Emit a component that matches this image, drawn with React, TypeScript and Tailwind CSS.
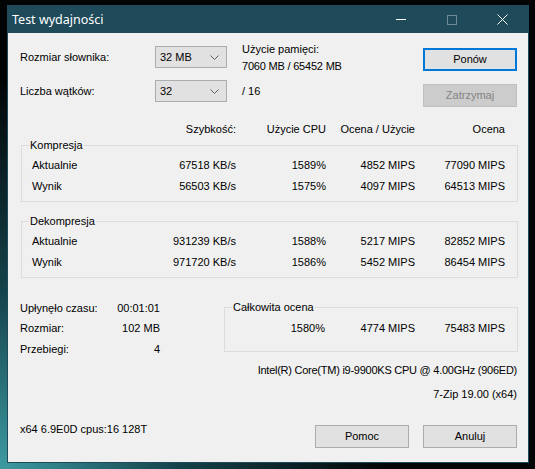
import React from 'react';

const tableCols = 'grid grid-cols-[124px_80px_90px_89px_90px]';

function Chevron() {
  return (
    <svg width="9" height="5" viewBox="0 0 9 5" className="text-[#5f5f5f]">
      <path d="M0.5 0.5 L4.5 4.5 L8.5 0.5" fill="none" stroke="currentColor" strokeWidth="1" />
    </svg>
  );
}

function Combo({ value }: { value: string }) {
  return (
    <div className="flex h-[22px] w-[72px] items-center justify-between border border-[#adadad] bg-[#e1e1e1] pl-[4px] pr-[7px]">
      <span>{value}</span>
      <Chevron />
    </div>
  );
}

function WinButton({ label, focused, disabled }: { label: string; focused?: boolean; disabled?: boolean }) {
  const look = disabled
    ? 'border border-[#bfbfbf] bg-[#cccccc] text-[#838383]'
    : focused
      ? 'border-2 border-[#0078d7] bg-[#e1e1e1]'
      : 'border border-[#adadad] bg-[#e1e1e1]';
  return (
    <button disabled={disabled} className={`flex h-[23px] w-[94px] items-center justify-center ${look}`}>
      {label}
    </button>
  );
}

function Group({ title, className, children }: { title: string; className?: string; children: React.ReactNode }) {
  return (
    <fieldset className={`border border-[#dcdcdc] ${className ?? ''}`}>
      <legend className="ml-[7px] px-[1px] leading-[13px]">{title}</legend>
      {children}
    </fieldset>
  );
}

function Row({ cells }: { cells: string[] }) {
  return (
    <div className={`${tableCols} h-[21px] items-center`}>
      <span>{cells[0]}</span>
      {cells.slice(1).map((c, i) => (
        <span key={i} className="text-right">{c}</span>
      ))}
    </div>
  );
}

const stats = [
  ['Upłynęło czasu:', '00:01:01'],
  ['Rozmiar:', '102 MB'],
  ['Przebiegi:', '4'],
];

export default function App() {
  return (
    <div className="h-[469px] w-[535px] overflow-hidden bg-[radial-gradient(circle_at_0%_100%,#3d9aa2_0%,#15424a_25%,#020405_55%)] pl-[7px] pt-[5px] font-['Liberation_Sans',Arial,sans-serif] text-[11px] leading-[13px] text-black">
      <div className="flex h-[458px] w-[522px] flex-col border border-[#1e4a5a] bg-[#f0f0f0]">
        {/* title bar */}
        <div className="flex h-[27px] items-center bg-[#1e4a5a] pl-[4px] text-white">
          <span className="font-['Noto_Sans',sans-serif] text-[12.5px]">Test wydajności</span>
          <div className="ml-auto flex h-full">
            <div className="flex w-[51px] items-center justify-center">
              <div className="h-px w-[10px] bg-white" />
            </div>
            <div className="flex w-[51px] items-center justify-center">
              <div className="h-[10px] w-[10px] border border-[#6f8d98]" />
            </div>
            <div className="flex w-[51px] items-center justify-center">
              <svg width="11" height="11" viewBox="0 0 11 11">
                <path d="M0.5 0.5 L10.5 10.5 M10.5 0.5 L0.5 10.5" stroke="white" strokeWidth="1" />
              </svg>
            </div>
          </div>
        </div>

        {/* settings */}
        <div className="flex h-[75px] pl-[12px] pt-[8px]">
          <div className="mt-[5px] flex w-[135px] flex-col gap-[12px]">
            <div className="flex h-[22px] items-center">Rozmiar słownika:</div>
            <div className="flex h-[22px] items-center">Liczba wątków:</div>
          </div>
          <div className="mt-[5px] flex flex-col gap-[12px]">
            <Combo value="32 MB" />
            <Combo value="32" />
          </div>
          <div className="ml-[15px] w-[181px] leading-[17px]">
            <div>Użycie pamięci:</div>
            <div className="tracking-[-0.2px]">7060 MB / 65452 MB</div>
            <div className="mt-[8px]">/ 16</div>
          </div>
          <div className="mt-[7px] flex flex-col gap-[13px]">
            <WinButton label="Ponów" focused />
            <WinButton label="Zatrzymaj" disabled />
          </div>
        </div>

        {/* column headers */}
        <div className={`${tableCols} ml-[24px] mt-[11px] h-[20px] items-center`}>
          <span />
          <span className="text-right">Szybkość:</span>
          <span className="text-right">Użycie CPU</span>
          <span className="text-right">Ocena / Użycie</span>
          <span className="text-right">Ocena</span>
        </div>

        <Group title="Kompresja" className="ml-[13px] w-[497px]">
          <div className="pb-[4px] pl-[10px] pt-[3px]">
            <Row cells={['Aktualnie', '67518 KB/s', '1589%', '4852 MIPS', '77090 MIPS']} />
            <Row cells={['Wynik', '56503 KB/s', '1575%', '4097 MIPS', '64513 MIPS']} />
          </div>
        </Group>

        <Group title="Dekompresja" className="ml-[13px] mt-[13px] w-[497px]">
          <div className="pb-[4px] pl-[10px] pt-[3px]">
            <Row cells={['Aktualnie', '931239 KB/s', '1588%', '5217 MIPS', '82852 MIPS']} />
            <Row cells={['Wynik', '971720 KB/s', '1586%', '5452 MIPS', '86454 MIPS']} />
          </div>
        </Group>

        {/* summary */}
        <div className="flex items-start">
          <div className="mt-[20px] grid w-[216px] grid-cols-[100px_40px] pl-[12px]">
            {stats.map(([k, v]) => (
              <React.Fragment key={k}>
                <span className="flex h-[20.5px] items-center">{k}</span>
                <span className="flex h-[20.5px] items-center justify-end">{v}</span>
              </React.Fragment>
            ))}
          </div>
          <div className="mt-[23px] w-[294px]">
            <Group title="Całkowita ocena">
              <div className="grid h-[25px] grid-cols-[100px_90px_90px] items-center pt-[4px]">
                <span className="text-right">1580%</span>
                <span className="text-right">4774 MIPS</span>
                <span className="text-right">75483 MIPS</span>
              </div>
              <div className="h-[12px]" />
            </Group>
            <div className="mt-[12px] pr-[1px] text-right tracking-[-0.25px]">
              Intel(R) Core(TM) i9-9900KS CPU @ 4.00GHz (906ED)
            </div>
            <div className="mt-[11px] pr-[1px] text-right">7-Zip 19.00 (x64)</div>
          </div>
        </div>

        {/* footer */}
        <div className="mb-[14px] mt-auto flex h-[25px] items-start pl-[12px] pr-[11px]">
          <span>x64 6.9E0D cpus:16 128T</span>
          <div className="ml-auto mt-[2px]">
            <WinButton label="Pomoc" />
          </div>
          <div className="ml-[14px] mt-[2px]">
            <WinButton label="Anuluj" />
          </div>
        </div>
      </div>
    </div>
  );
}
